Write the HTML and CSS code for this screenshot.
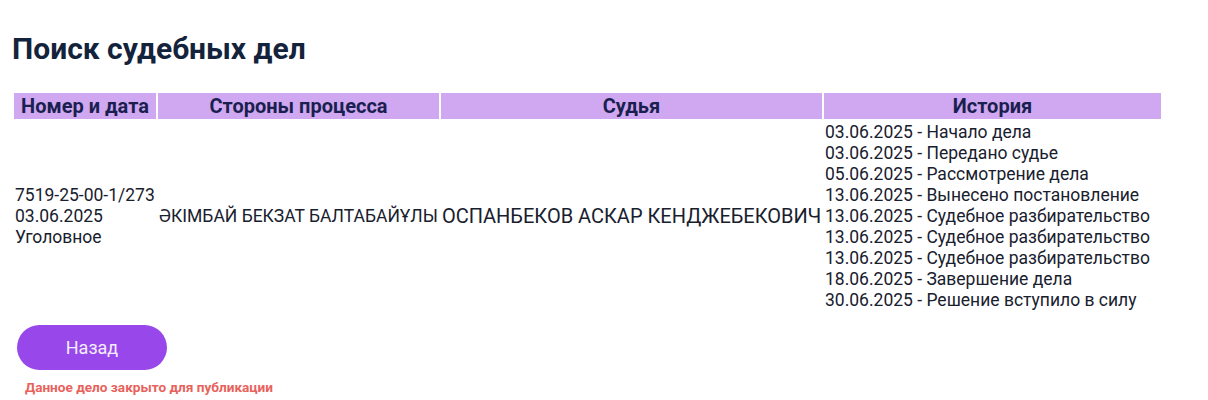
FILE: index.html
```html
<!DOCTYPE html>
<html lang="ru">
<head>
<meta charset="utf-8">
<title>Поиск судебных дел</title>
<link rel="stylesheet" href="styles.css">
</head>
<body>
<main class="page">
  <h1 class="title">Поиск судебных дел</h1>
  <table class="cases">
    <thead>
      <tr>
        <th class="col-num">Номер и дата</th>
        <th class="col-sides">Стороны процесса</th>
        <th class="col-judge">Судья</th>
        <th class="col-hist">История</th>
      </tr>
    </thead>
    <tbody>
      <tr>
        <td>7519-25-00-1/273<br>03.06.2025<br>Уголовное</td>
        <td>ӘКІМБАЙ БЕКЗАТ БАЛТАБАЙҰЛЫ</td>
        <td class="judge">ОСПАНБЕКОВ АСКАР КЕНДЖЕБЕКОВИЧ</td>
        <td>
          <div>03.06.2025 - Начало дела</div>
          <div>03.06.2025 - Передано судье</div>
          <div>05.06.2025 - Рассмотрение дела</div>
          <div>13.06.2025 - Вынесено постановление</div>
          <div>13.06.2025 - Судебное разбирательство</div>
          <div>13.06.2025 - Судебное разбирательство</div>
          <div>13.06.2025 - Судебное разбирательство</div>
          <div>18.06.2025 - Завершение дела</div>
          <div>30.06.2025 - Решение вступило в силу</div>
        </td>
      </tr>
    </tbody>
  </table>
  <div class="actions">
    <button class="back" type="button">Назад</button>
    <p class="notice">Данное дело закрыто для публикации</p>
  </div>
</main>
</body>
</html>
```

FILE: styles.css
```css
html, body {
  margin: 0;
  padding: 0;
  background: #ffffff;
}
body {
  font-family: Roboto, "Liberation Sans", sans-serif;
  color: #1b2433;
}
.page {
  padding: 31px 12px 0 12px;
}
.title {
  margin: 0 0 25px 0;
  font-size: 30px;
  font-weight: 700;
  line-height: 35px;
  color: #14233c;
}
.cases {
  border-collapse: separate;
  border-spacing: 2px;
  width: 1151px;
  table-layout: fixed;
}
.cases th {
  background: #cfa8f1;
  color: #1a1f4f;
  font-size: 20px;
  font-weight: 700;
  line-height: 24px;
  padding: 1px;
  text-align: center;
}
.cases td {
  font-size: 17.5px;
  line-height: 21px;
  padding: 1px;
  vertical-align: middle;
  white-space: nowrap;
  color: #18202e;
}
.cases td.judge {
  font-size: 20px;
}
.col-num { width: 140px; }
.col-sides { width: 279px; }
.col-judge { width: 379px; }
.col-hist { width: 335px; }
.actions {
  padding: 11px 0 0 5px;
}
.back {
  display: block;
  width: 150px;
  height: 45px;
  border: none;
  border-radius: 23px;
  background: #9747ea;
  color: #f5eefe;
  font-family: Roboto, "Liberation Sans", sans-serif;
  font-size: 18px;
  cursor: pointer;
}
.notice {
  margin: 9px 0 0 8px;
  font-size: 13.6px;
  line-height: 16px;
  font-weight: 700;
  color: #e8625c;
}
```
